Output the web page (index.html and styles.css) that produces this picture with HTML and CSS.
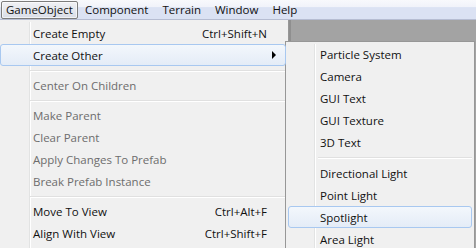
FILE: index.html
```html
<!DOCTYPE html>
<html lang="en">
<head>
    <meta charset="UTF-8">
    <title>GameObject menu</title>
    <link rel="stylesheet" href="styles.css">
</head>
<body>
    <div class="menubar">
        <div class="bar-item open">GameObject</div>
        <div class="bar-item">Component</div>
        <div class="bar-item">Terrain</div>
        <div class="bar-item">Window</div>
        <div class="bar-item">Help</div>
    </div>

    <div class="menu main">
        <div class="item"><span>Create Empty</span><span class="key">Ctrl+Shift+N</span></div>
        <div class="item hover"><span>Create Other</span><span class="arrow"></span></div>
        <div class="sep"></div>
        <div class="item off"><span>Center On Children</span></div>
        <div class="sep"></div>
        <div class="item off"><span>Make Parent</span></div>
        <div class="item off"><span>Clear Parent</span></div>
        <div class="item off"><span>Apply Changes To Prefab</span></div>
        <div class="item off"><span>Break Prefab Instance</span></div>
        <div class="sep"></div>
        <div class="item"><span>Move To View</span><span class="key">Ctrl+Alt+F</span></div>
        <div class="item"><span>Align With View</span><span class="key">Ctrl+Shift+F</span></div>
    </div>

    <!-- submenu of Create Other -->
    <div class="menu sub">
        <div class="item"><span>Particle System</span></div>
        <div class="item"><span>Camera</span></div>
        <div class="item"><span>GUI Text</span></div>
        <div class="item"><span>GUI Texture</span></div>
        <div class="item"><span>3D Text</span></div>
        <div class="sep"></div>
        <div class="item"><span>Directional Light</span></div>
        <div class="item"><span>Point Light</span></div>
        <div class="item hover"><span>Spotlight</span></div>
        <div class="item"><span>Area Light</span></div>
    </div>
</body>
</html>
```

FILE: styles.css
```css
* {
    margin: 0;
    padding: 0;
    box-sizing: border-box;
}

body {
    width: 476px;
    height: 248px;
    overflow: hidden;
    position: relative;
    background: #a3a3a3;
    font-family: 'Open Sans', sans-serif;
    font-size: 11.5px;
    color: #111;
}

/* Menu bar */
.menubar {
    height: 20px;
    display: flex;
    align-items: center;
    padding-left: 1px;
    background: linear-gradient(#f8f9fc 0, #f1f3fa 35%, #dbe2f3 40%, #dbe2f3 100%);
    border-bottom: 1px solid #b6bdd2;
}

.bar-item {
    height: 18px;
    line-height: 16px;
    padding: 0 6px;
    border: 1px solid transparent;
}

.bar-item.open {
    padding: 0 5px 0 4px;
    width: 77px;
    border-color: #7c7c7c;
    border-radius: 2px;
    background: linear-gradient(#f0f1f5, #d9dde7);
    box-shadow: inset 0 0 0 1px rgba(255,255,255,0.6);
}

/* Drop-down menus */
.menu {
    background: #f0f0f0;
    padding: 2px;
    position: relative;
    overflow: hidden;
}

.menu::before {
    content: '';
    position: absolute;
    top: 2px;
    bottom: 0;
    width: 1px;
    background: #e2e3e3;
    box-shadow: 1px 0 0 #fff;
}

.main {
    width: 289px;
    height: 228px;
    padding-left: 0;
    border-right: 1px solid #979797;
    box-shadow: 2px 0 0 rgba(0,0,0,0.12);
}

.main::before {
    left: 29px;
}

.sub {
    position: absolute;
    left: 285px;
    top: 41px;
    width: 190px;
    height: 207px;
    border: 1px solid #979797;
    border-bottom: none;
    padding: 1px 2px 0 2px;
}

.sub::before {
    left: 28px;
}

.item {
    height: 22px;
    flex-shrink: 0;
    display: flex;
    align-items: center;
    padding-left: 32px;
    padding-right: 18px;
    border: 1px solid transparent;
    border-radius: 3px;
    position: relative;
    z-index: 1;
}

.sub .item {
    padding-left: 31px;
}

.item .key {
    margin-left: auto;
}

.item.off {
    color: #6d6d6d;
}

.item.hover {
    border-color: #a8c8f0;
    background: linear-gradient(#f3f7fc, #e4ecf7);
}

.arrow {
    margin-left: auto;
    margin-right: -9px;
    width: 0;
    height: 0;
    border-top: 4px solid transparent;
    border-bottom: 4px solid transparent;
    border-left: 4px solid #000;
}

.sep {
    height: 8px;
    margin-left: 30px;
    position: relative;
}

.sub .sep {
    height: 9px;
}

.sep::after {
    content: '';
    position: absolute;
    left: 0;
    right: 0;
    top: 4px;
    height: 1px;
    background: #e0e0e0;
    box-shadow: 0 1px 0 #fff;
}
```
